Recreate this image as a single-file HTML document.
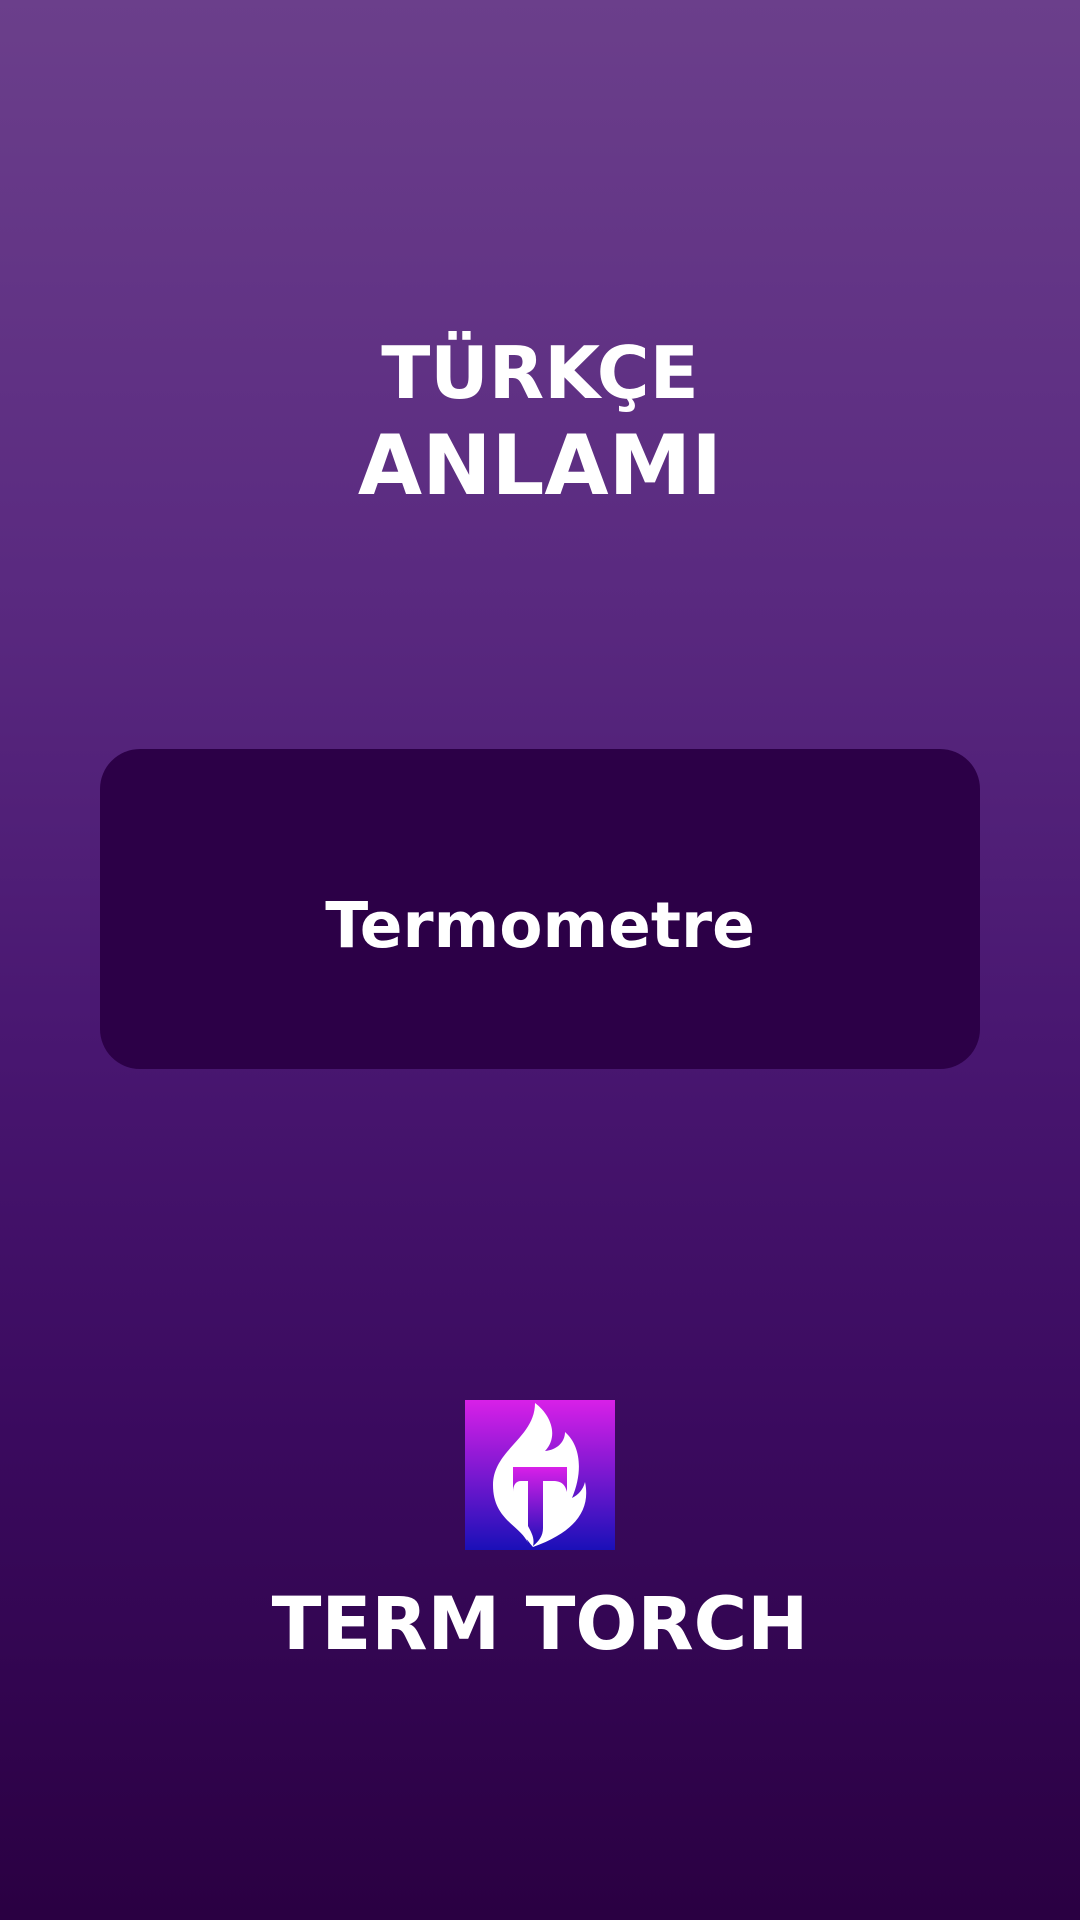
<!DOCTYPE html>
<html><head><meta charset="utf-8"><style>
html,body{margin:0;padding:0}
body{width:1080px;height:1920px;position:relative;overflow:hidden;background:linear-gradient(180deg,#6b3f8b 0%,#5a2a80 30%,#481670 55%,#3a0a5e 75%,#2a0042 100%);font-family:"DejaVu Sans","Liberation Sans",sans-serif;font-weight:bold;color:#fff}
.t{position:absolute;left:0;width:1080px;text-align:center;white-space:nowrap;line-height:1}
.card{position:absolute;left:100px;top:749px;width:880px;height:320px;border-radius:40px;background:#2c0047}
</style></head><body>
<div class="t" style="top:337px;font-size:72px">TÜRKÇE</div>
<div class="t" style="top:424px;font-size:83px">ANLAMI</div>
<div class="card"></div>
<div class="t" style="top:894px;font-size:63px">Termometre</div>
<svg style="position:absolute;left:465px;top:1400px" width="150" height="150" viewBox="0 0 150 150">
<defs><linearGradient id="g" x1="0" y1="0" x2="0" y2="1"><stop offset="0" stop-color="#d820e8"/><stop offset="1" stop-color="#1a10b8"/></linearGradient></defs>
<rect width="150" height="150" fill="url(#g)"/>
<path fill="#fff" d="M70,3 C86,15 94,36 80,51 C92,50 100,42 100,32 C116,46 118,72 107,98 C113,95 118,90 120,82 C126,110 110,132 68,147 C62,140 60,136 63,143 C55,125 28,120 28,85 C28,50 70,38 70,3 Z"/>
<path fill="url(#g)" d="M48,67 H102 V92 C100,84 96,81 88,81 H78 V128 C78,136 74,141 68,146 C70,138 66,132 63,126 V81 H56 C51,81 48,85 48,92 Z"/>
</svg>
<div class="t" style="top:1588px;font-size:73px">TERM TORCH</div>
</body></html>
